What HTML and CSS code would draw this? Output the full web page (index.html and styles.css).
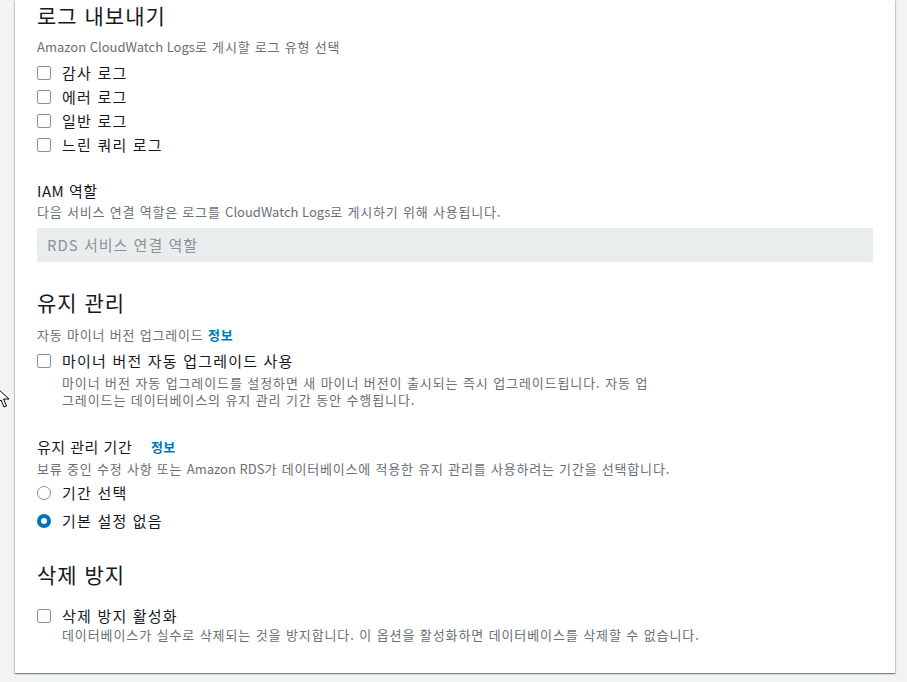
FILE: index.html
```html
<!DOCTYPE html>
<html lang="ko">
<head>
<meta charset="utf-8">
<title>로그 내보내기</title>
<link rel="stylesheet" href="styles.css">
</head>
<body>
<div class="page">
  <div class="card">
    <h2 class="heading">로그 내보내기</h2>
    <div class="sub sub-first"><span class="en">Amazon CloudWatch Logs</span>로 게시할 로그 유형 선택</div>
    <div class="checklist">
      <label class="check-row"><span class="box"></span><span class="label">감사 로그</span></label>
      <label class="check-row"><span class="box"></span><span class="label">에러 로그</span></label>
      <label class="check-row"><span class="box"></span><span class="label">일반 로그</span></label>
      <label class="check-row"><span class="box"></span><span class="label">느린 쿼리 로그</span></label>
    </div>

    <div class="field-label iam">IAM 역할</div>
    <div class="sub desc-tight">다음 서비스 연결 역할은 로그를 <span class="en">CloudWatch Logs</span>로 게시하기 위해 사용됩니다.</div>
    <div class="input-disabled">RDS 서비스 연결 역할</div>

    <h2 class="heading h-maint">유지 관리</h2>
    <div class="sub sub-auto">자동 마이너 버전 업그레이드 <a class="info">정보</a></div>
    <div class="option opt-auto">
      <span class="box"></span>
      <div class="option-body">
        <div class="label">마이너 버전 자동 업그레이드 사용</div>
        <div class="option-desc wrap-desc">마이너 버전 자동 업그레이드를 설정하면 새 마이너 버전이 출시되는 즉시 업그레이드됩니다. 자동 업그레이드는 데이터베이스의 유지 관리 기간 동안 수행됩니다.</div>
      </div>
    </div>

    <div class="field-label window">유지 관리 기간 <a class="info info-gap">정보</a></div>
    <div class="sub desc-tight">보류 중인 수정 사항 또는 <span class="en">Amazon RDS</span>가 데이터베이스에 적용한 유지 관리를 사용하려는 기간을 선택합니다.</div>
    <div class="radios">
      <label class="radio-row"><span class="radio"></span><span class="label">기간 선택</span></label>
      <label class="radio-row"><span class="radio checked"></span><span class="label">기본 설정 없음</span></label>
    </div>

    <h2 class="heading h-del">삭제 방지</h2>
    <div class="option opt-del">
      <span class="box"></span>
      <div class="option-body">
        <div class="label">삭제 방지 활성화</div>
        <div class="option-desc single">데이터베이스가 실수로 삭제되는 것을 방지합니다. 이 옵션을 활성화하면 데이터베이스를 삭제할 수 없습니다.</div>
      </div>
    </div>
  </div>
</div>
<svg class="cursor" width="14" height="22" viewBox="0 0 14 22" aria-hidden="true">
  <path d="M1 1 L1 17 L5 13 L8 20 L10.5 19 L7.5 12 L13 12 Z" fill="#fff" stroke="#000" stroke-width="1" stroke-linejoin="miter"/>
</svg>
</body>
</html>
```

FILE: styles.css
```css
* { box-sizing: border-box; }

html, body {
  margin: 0;
  padding: 0;
  background: #f2f3f3;
}

body {
  font-family: "Noto Sans CJK KR", "Open Sans", sans-serif;
  color: #16191f;
  width: 907px;
  height: 682px;
  overflow: hidden;
  position: relative;
}

.page {
  padding: 0 12px 0 15px;
}

.card {
  background: #fff;
  width: 880px;
  height: 673px;
  padding: 1px 22px 0 22px;
  box-shadow: 0 1px 1px 0 rgba(0, 28, 36, 0.3),
              1px 1px 1px 0 rgba(0, 28, 36, 0.15),
              -1px 1px 1px 0 rgba(0, 28, 36, 0.15);
}

.heading {
  margin: 0;
  font-size: 21px;
  letter-spacing: 1px;
  font-weight: 400;
  line-height: 28px;
  color: #16191f;
}

.sub {
  font-size: 13px;
  letter-spacing: 0.8px;
  line-height: 18px;
  color: #687078;
}

.en { letter-spacing: 0; }

.sub-first { margin-top: 9px; }

.checklist {
  margin-top: 5px;
}

.check-row,
.radio-row {
  display: flex;
  align-items: center;
  height: 24px;
}

.radio-row { height: 28px; }

.box {
  flex: none;
  width: 14px;
  height: 14px;
  border: 1px solid #879596;
  border-radius: 2px;
  background: #fff;
  margin-right: 11px;
}

.label {
  font-size: 15px;
  letter-spacing: 1.2px;
  line-height: 20px;
  color: #16191f;
}

.field-label {
  font-size: 15px;
  letter-spacing: 0.5px;
  line-height: 20px;
  color: #16191f;
}

.iam { margin-top: 24px; }

.desc-tight { margin-top: 2px; }

.input-disabled {
  margin-top: 7px;
  height: 34px;
  background: #eaeded;
  padding: 0 10px;
  font-size: 15px;
  letter-spacing: 1px;
  line-height: 34px;
  color: #879596;
}

.h-maint { margin-top: 26px; }

.sub-auto { margin-top: 10px; }

.info {
  color: #0073bb;
  font-weight: 700;
  text-decoration: none;
}

.option {
  display: flex;
  align-items: flex-start;
}

.option .box { margin-top: 3px; }

.opt-auto { margin-top: 7px; }

.option-desc {
  font-size: 13px;
  letter-spacing: 0.9px;
  color: #687078;
}

.wrap-desc {
  margin-top: 3px;
  line-height: 17px;
  width: 592px;
}

.window { margin-top: 29px; }

.info-gap {
  margin-left: 14px;
  font-size: 13px;
  letter-spacing: 0.5px;
}

.window .info-gap { position: relative; top: -1px; }

.radios { margin-top: 1px; }

.radio {
  flex: none;
  width: 14px;
  height: 14px;
  border: 1px solid #879596;
  border-radius: 50%;
  background: #fff;
  margin-right: 11px;
}

.radio.checked {
  border: 4px solid #0073bb;
}

.h-del { margin-top: 25px; }

.opt-del { margin-top: 18px; }

.single {
  margin-top: 0;
  line-height: 18px;
}

.cursor {
  position: absolute;
  left: -4px;
  top: 387px;
}
```
